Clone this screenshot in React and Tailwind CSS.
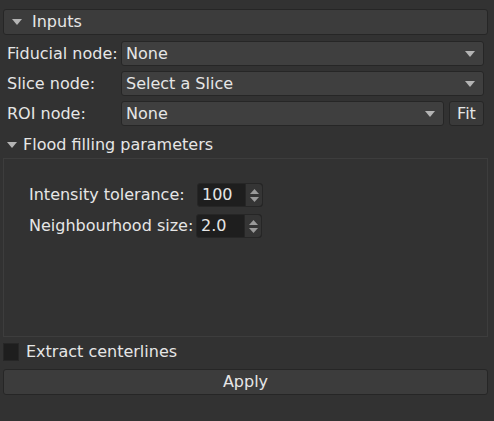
import React from "react";

const Arrow = ({ className = "" }) => (
  <svg width="10" height="6" viewBox="0 0 10 6" className={className}>
    <polygon points="0,0 10,0 5,6" fill="#b4b4b4" />
  </svg>
);

const Combo = ({ value, className = "" }) => (
  <div
    className={`flex h-[25px] items-center justify-between rounded-[3px] border border-[#262626] bg-[#3f3f3f] pl-[4px] pr-[8px] ${className}`}
  >
    <span>{value}</span>
    <Arrow className="mt-[1px]" />
  </div>
);

const Spin = ({ value }) => (
  <div className="flex h-[24px] w-[66px] items-center rounded-[3px] border border-[#262626] bg-[#1e1e1e] pl-[4px]">
    <span className="flex-1">{value}</span>
    <div className="flex h-full w-[17px] flex-col items-center justify-center gap-[3px] rounded-r-[3px] border-l border-[#262626] bg-[#353535]">
      <svg width="9" height="5" viewBox="0 0 9 5">
        <polygon points="0,5 9,5 4.5,0" fill="#9a9a9a" />
      </svg>
      <svg width="9" height="5" viewBox="0 0 9 5">
        <polygon points="0,0 9,0 4.5,5" fill="#9a9a9a" />
      </svg>
    </div>
  </div>
);

export default function App() {
  return (
    <div
      className="flex h-[421px] w-[494px] flex-col bg-[#323232] pl-[3px] pr-[6px] pt-[9px] text-[16px] leading-none text-[#e6e6e6]"
      style={{ fontFamily: "'DejaVu Sans', sans-serif" }}
    >
      <div className="flex h-[26px] items-center gap-[10px] rounded-[3px] border border-[#262626] bg-[#3c3c3c] pl-[8px]">
        <Arrow />
        <span>Inputs</span>
      </div>

      <div className="mt-[6px] flex flex-col gap-[5px] pl-[4px] pr-[4px]">
        <div className="flex items-center">
          <span className="w-[114px]">Fiducial node:</span>
          <Combo value="None" className="flex-1" />
        </div>
        <div className="flex items-center">
          <span className="w-[114px]">Slice node:</span>
          <Combo value="Select a Slice" className="flex-1" />
        </div>
        <div className="flex items-center">
          <span className="w-[114px]">ROI node:</span>
          <Combo value="None" className="flex-1" />
          <div className="ml-[5px] flex h-[25px] w-[35px] items-center justify-center rounded-[3px] border border-[#262626] bg-[#3a3a3a]">
            Fit
          </div>
        </div>
      </div>

      <div className="mt-[11px] flex h-[16px] items-center gap-[6px] pl-[4px]">
        <Arrow />
        <span>Flood filling parameters</span>
      </div>

      <div className="mt-[5px] flex h-[179px] flex-col gap-[7px] border border-[#3d3d3d] pl-[25px] pt-[24px]">
        <div className="flex items-center">
          <span className="w-[168px]">Intensity tolerance:</span>
          <Spin value="100" />
        </div>
        <div className="flex items-center">
          <span className="w-[167px]">Neighbourhood size:</span>
          <Spin value="2.0" />
        </div>
      </div>

      <div className="mt-[6px] flex h-[18px] items-center gap-[7px]">
        <div className="h-[18px] w-[16px] border border-[#262626] bg-[#1e1e1e]" />
        <span>Extract centerlines</span>
      </div>

      <div className="mt-[8px] flex h-[26px] items-center justify-center rounded-[3px] border border-[#262626] bg-[#3c3c3c]">
        Apply
      </div>
    </div>
  );
}
